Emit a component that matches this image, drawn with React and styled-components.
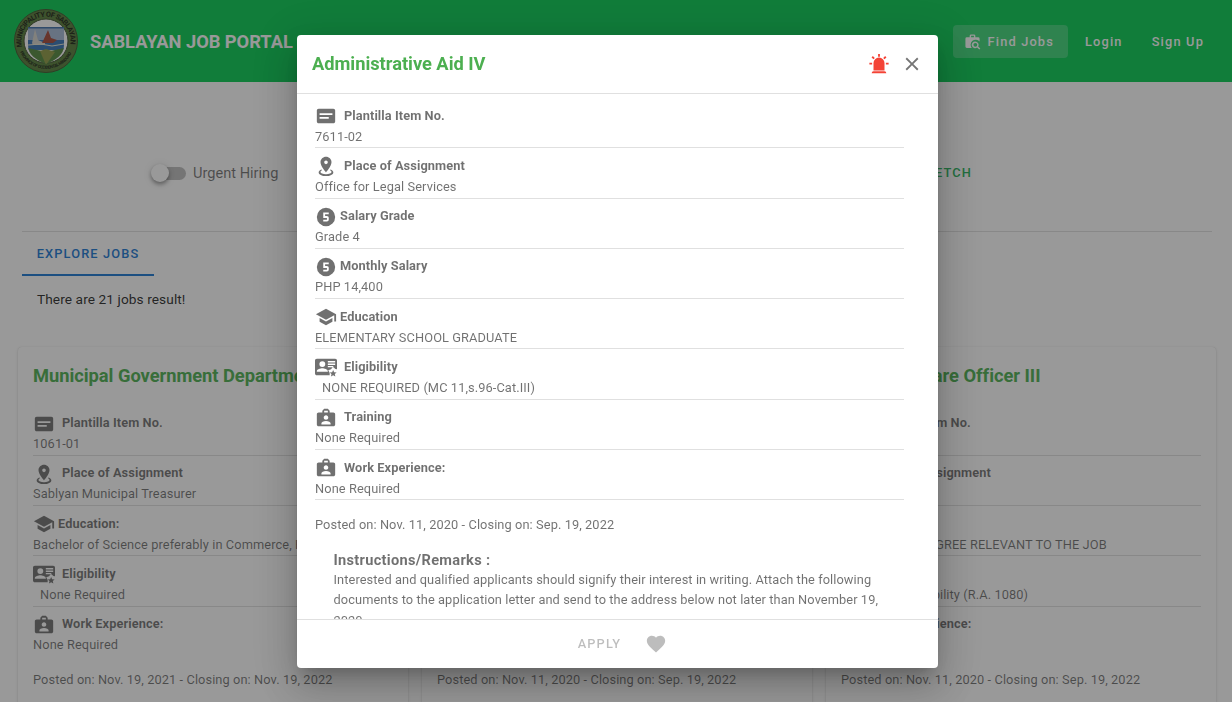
import React from "react";
import styled, { createGlobalStyle } from "styled-components";

const GlobalStyle = createGlobalStyle`
  * { box-sizing: border-box; }
  body { margin: 0; overflow: hidden; font-family: Roboto, "Liberation Sans", sans-serif; background: #fff; }
`;

const ICONS = {
  card: "M20 4H4C2.9 4 2 4.9 2 6V18C2 19.1 2.9 20 4 20H20C21.1 20 22 19.1 22 18V6C22 4.9 21.1 4 20 4M5 13H15V15H5V13M19 11H5V9H19V11Z",
  place: "M12 2C15.31 2 18 4.66 18 7.95C18 12.41 12 19 12 19C12 19 6 12.41 6 7.95C6 4.66 8.69 2 12 2M12 6A2 2 0 0 0 10 8A2 2 0 0 0 12 10A2 2 0 0 0 14 8A2 2 0 0 0 12 6M20 19C20 21.21 16.42 23 12 23C7.58 23 4 21.21 4 19C4 17.71 5.22 16.56 7.11 15.83L7.75 16.74C6.67 17.19 6 17.81 6 18.5C6 19.88 8.69 21 12 21C15.31 21 18 19.88 18 18.5C18 17.81 17.33 17.19 16.25 16.74L16.89 15.83C18.78 16.56 20 17.71 20 19Z",
  salary: "M12 2A10 10 0 0 1 22 12A10 10 0 0 1 12 22A10 10 0 0 1 2 12A10 10 0 0 1 12 2M15 9V7H9V13H13V15H9V17H13A2 2 0 0 0 15 15V13C15 11.89 14.1 11 13 11H11V9H15Z",
  school: "M12 3L1 9L12 15L21 10.09V17H23V9M5 13.18V17.18L12 21L19 17.18V13.18L12 17L5 13.18Z",
  eligibility: "M2 3H22C23.1 3 24 3.9 24 5V14.5L22.2 14.3L19.7 11.6L17.5 14.5L14.5 15.5L16 18.5V21H2C.9 21 0 20.1 0 19V5C0 3.9.9 3 2 3M14 5.5V7H22V5.5H14M14 8.3V9.8H22V8.3H14M14 11V12.3H20V11H14M8 13.4C6 13.4 2 14.5 2 16.5V17.3H14V16.5C14 14.5 10 13.4 8 13.4M8 5.6A3.2 3.2 0 0 0 4.8 8.8A3.2 3.2 0 0 0 8 12A3.2 3.2 0 0 0 11.2 8.8A3.2 3.2 0 0 0 8 5.6M19.8 15.2L20.9 17.7L23.6 17.9L21.6 19.7L22.2 22.4L19.8 21L17.4 22.4L18 19.7L16 17.9L18.7 17.7Z",
  work: "M20 6H16V4L14 2H10L8 4V6H4C2.9 6 2 6.9 2 8V19C2 20.1 2.9 21 4 21H20C21.1 21 22 20.1 22 19V8C22 6.9 21.1 6 20 6M10 4H14V6H10V4M12 9C13.4 9 14.5 10.1 14.5 11.5S13.4 14 12 14S9.5 12.9 9.5 11.5S10.6 9 12 9M17 19H7V17.75C7 16.37 9.24 15.25 12 15.25S17 16.37 17 17.75V19Z",
  alarm: "M6 6.9L3.87 4.78L5.28 3.37L7.4 5.5L6 6.9M13 1V4H11V1H13M20.13 4.78L18 6.9L16.6 5.5L18.72 3.37L20.13 4.78M4.5 10.5V12.5H1.5V10.5H4.5M19.5 10.5H22.5V12.5H19.5V10.5M6 20H18A2 2 0 0 1 20 22H4A2 2 0 0 1 6 20M12 5A6 6 0 0 1 18 11V19H6V11A6 6 0 0 1 12 5Z",
  close: "M19 6.41L17.59 5L12 10.59L6.41 5L5 6.41L10.59 12L5 17.59L6.41 19L12 13.41L17.59 19L19 17.59L13.41 12L19 6.41Z",
  heart: "M12 21.35L10.55 20.03C5.4 15.36 2 12.27 2 8.5C2 5.41 4.42 3 7.5 3C9.24 3 10.91 3.81 12 5.08C13.09 3.81 14.76 3 16.5 3C19.58 3 22 5.41 22 8.5C22 12.27 18.6 15.36 13.45 20.03L12 21.35Z",
  search: "M10 2H14A2 2 0 0 1 16 4V6H20A2 2 0 0 1 22 8V12A6.5 6.5 0 1 0 11 21H4A2 2 0 0 1 2 19V8A2 2 0 0 1 4 6H8V4A2 2 0 0 1 10 2M10 4V6H14V4H10M16 12A4.7 4.7 0 0 1 20 19L23 22L21.6 23.4L18.5 20.4A4.7 4.7 0 1 1 16 12M16 14A2.7 2.7 0 1 0 16 19.4A2.7 2.7 0 1 0 16 14Z",
};

const IconSvg = styled.svg`
  width: ${(p) => p.$size}px;
  height: ${(p) => p.$size}px;
  flex: none;
  display: block;
  fill: currentColor;
  fill-rule: evenodd;
`;
const Icon = ({ name, size = 22 }) => (
  <IconSvg viewBox="0 0 24 24" $size={size}><path d={ICONS[name]} /></IconSvg>
);

const Page = styled.div`
  height: 702px;
  overflow: hidden;
  display: flex;
  flex-direction: column;
`;
const Header = styled.header`
  height: 82px;
  flex: none;
  display: flex;
  align-items: center;
  padding: 0 16px 0 14px;
  background: #04cb51;
  color: #fff;
`;
const Seal = styled.svg`width: 64px; height: 64px; flex: none;`;
const Brand = styled.h1`
  margin: 0 auto 0 12px;
  padding-top: 1px;
  font-size: 18.3px;
  font-weight: 700;
  line-height: 30px;
  letter-spacing: -0.03px;
`;
const Nav = styled.nav`display: flex; align-items: center; gap: 5px;`;
const NavButton = styled.button`
  height: 33px;
  display: flex;
  align-items: center;
  gap: 6px;
  border: 0;
  border-radius: 4px;
  padding: 0 ${(p) => (p.$active ? "14px 0 11px" : "12px")};
  background: ${(p) => (p.$active ? "rgba(255,255,255,.22)" : "transparent")};
  color: #fff;
  font: 500 12.8px Roboto, sans-serif;
  letter-spacing: 1.17px;
`;
const Filters = styled.section`
  height: 150px;
  flex: none;
  margin: 0 20px 0 22px;
  padding: 0 240px 0 129px;
  display: flex;
  align-items: center;
  justify-content: space-between;
  border-bottom: 1px solid #e0e0e0;
`;
const SwitchLabel = styled.label`
  display: flex;
  align-items: center;
  gap: 7px;
  padding-top: 33px;
  font-size: 14.6px;
  line-height: 18px;
  color: rgba(0,0,0,.56);
`;
const Track = styled.span`
  width: 33px;
  height: 13px;
  margin-left: 2px;
  border-radius: 7px;
  background: #bdbdbd;
  display: flex;
  align-items: center;
`;
const Thumb = styled.span`
  width: 18px;
  height: 18px;
  margin-left: -2px;
  flex: none;
  border-radius: 50%;
  background: #fff;
  box-shadow: 0 2px 4px -1px rgba(0,0,0,.3), 0 3px 4px rgba(0,0,0,.18), 0 1px 8px rgba(0,0,0,.14);
`;
const FetchButton = styled.button`
  border: 0;
  padding: 32px 0 0;
  background: none;
  color: #27b25a;
  font: 500 12.8px Roboto, sans-serif;
  letter-spacing: 1.14px;
`;
const Tab = styled.div`
  width: 132px;
  height: 44px;
  flex: none;
  margin-left: 22px;
  text-align: center;
  line-height: 44px;
  font-size: 12.8px;
  font-weight: 500;
  letter-spacing: 1.14px;
  color: #1976d2;
  border-bottom: 2px solid #1976d2;
`;
const ResultText = styled.p`
  margin: 14px 0 0 37px;
  height: 57px;
  flex: none;
  font-size: 13.7px;
  line-height: 19px;
  letter-spacing: 0.08px;
  color: rgba(0,0,0,.87);
`;
const Cards = styled.main`
  display: grid;
  grid-template-columns: repeat(3, 390px);
  gap: 14px;
  padding-left: 18px;
  height: 400px;
  flex: none;
`;
const Card = styled.article`
  padding: 14px 15px;
  border-radius: 4px;
  background: #fff;
  box-shadow: 0 1px 3px rgba(0,0,0,.16), 0 0 1px rgba(0,0,0,.14);
  white-space: nowrap;
  overflow: hidden;
`;
const CardTitle = styled.h2`
  margin: 0 0 14px;
  font-size: 18.3px;
  font-weight: 700;
  line-height: 30.5px;
  letter-spacing: -0.02px;
  color: #4caf50;
`;
const Row = styled.div`
  height: 50.3px;
  border-bottom: ${(p) => (p.$last ? "0" : "1px solid rgba(0,0,0,.12)")};
  color: rgba(0,0,0,.56);
  white-space: nowrap;
`;
const RowLabel = styled.div`
  display: flex;
  align-items: center;
  gap: ${(p) => (p.$tight ? 3 : 7)}px;
  padding-top: 6px;
  height: 30px;
  font-size: 12.8px;
  font-weight: 700;
  line-height: 20px;
  letter-spacing: 0.08px;
`;
const LabelText = styled.span`height: 21px;`;
const RowValue = styled.div`
  padding-left: ${(p) => p.$indent || 0}px;
  font-size: 12.8px;
  line-height: 20px;
  margin-top: -1.5px;
  letter-spacing: 0.1px;
`;
const Posted = styled.div`
  margin-top: ${(p) => p.$top}px;
  font-size: 12.8px;
  line-height: 20px;
  letter-spacing: 0.09px;
  color: rgba(0,0,0,.56);
`;

const Overlay = styled.div`
  position: fixed;
  inset: 0;
  display: flex;
  align-items: center;
  justify-content: center;
  padding: 1px 0 0 3px;
  background: rgba(33,33,33,.46);
`;
const Dialog = styled.section`
  width: 641px;
  height: 633px;
  display: flex;
  flex-direction: column;
  overflow: hidden;
  border-radius: 4px;
  background: #fff;
  box-shadow: 0 10px 14px -6px rgba(0,0,0,.2), 0 22px 35px 3px rgba(0,0,0,.14), 0 8px 42px 7px rgba(0,0,0,.12);
`;
const DialogHeader = styled.header`
  height: 59px;
  flex: none;
  display: flex;
  align-items: center;
  gap: 11px;
  padding: 0 15px;
  border-bottom: 1px solid rgba(0,0,0,.12);
`;
const DialogTitle = styled.h2`
  margin: 0 auto 0 0;
  font-size: 18.3px;
  font-weight: 700;
  line-height: 30px;
  letter-spacing: -0.02px;
  color: #4caf50;
`;
const IconButton = styled.button`
  border: 0;
  padding: 0;
  background: none;
  color: ${(p) => p.$color};
`;
const DialogBody = styled.div`
  flex: 1;
  min-height: 0;
  overflow: hidden;
  padding: 4px 34px 0 18px;
`;
const Remarks = styled.div`
  margin: 16.5px 0 0 18.5px;
  font-size: 12.8px;
  line-height: 20.1px;
  letter-spacing: 0.09px;
  color: rgba(0,0,0,.56);
`;
const RemarksTitle = styled.h3`
  margin: 0;
  font-size: 14.6px;
  font-weight: 700;
  line-height: 19px;
  letter-spacing: 0.3px;
`;
const DialogFooter = styled.footer`
  height: 49px;
  flex: none;
  display: flex;
  align-items: center;
  justify-content: center;
  gap: 24px;
  padding-left: 10px;
  border-top: 1px solid rgba(0,0,0,.12);
`;
const ApplyButton = styled.button`
  border: 0;
  padding: 0 0 2px;
  background: none;
  color: rgba(0,0,0,.26);
  font: 500 12.8px Roboto, sans-serif;
  letter-spacing: 1.14px;
`;

const Field = ({ icon, label, value, indent, last }) => (
  <Row $last={last}>
    <RowLabel $tight={icon === "school" || icon === "salary"}>
      <Icon name={icon} />
      <LabelText>{label}</LabelText>
    </RowLabel>
    <RowValue $indent={indent}>{value}</RowValue>
  </Row>
);

const MunicipalSeal = () => (
  <Seal viewBox="0 0 64 64">
    <defs>
      <path id="sealTop" d="M8.2 38A24.5 24.5 0 1 1 55.8 38" />
      <path id="sealBottom" d="M6 43A28.5 28.5 0 0 0 58 43" />
      <clipPath id="shield"><path d="M14 18H50V36C50 46 42 51 32 55C22 51 14 46 14 36Z" /></clipPath>
    </defs>
    <circle cx="32" cy="32" r="31.5" fill="#567c38" stroke="#40532a" />
    <circle cx="32" cy="32" r="22" fill="#fff" stroke="#3d4f2c" />
    <g clipPath="url(#shield)">
      <path fill="#a5b9d5" d="M14 18H50V32H14Z" />
      <path fill="#3574b6" d="M14 31H50V41H14Z" />
      <path fill="#52883c" d="M14 39L32 43L50 39V56H14Z" />
      <path fill="#8f9a43" d="M26 42L32 40L41 43L32 56Z" />
      <path fill="#d5d3cc" d="M18 34L21 20L24 31L31 34V36H19Z" />
      <path fill="#a44737" d="M29 32L34 21L37 29L43 31L39 34H28Z" />
      <path fill="none" stroke="#e8e4d0" d="M14 36L27 35L38 37L50 35" />
      <path fill="none" stroke="#3b6da8" strokeWidth="1.5" d="M14 18.7H50" />
    </g>
    <text fill="#182312" fontFamily="Roboto" fontWeight="700" fontSize="7.2"><textPath href="#sealTop" textLength="86">MUNICIPALITY OF SABLAYAN</textPath></text>
    <text fill="#182312" fontFamily="Roboto" fontWeight="700" fontSize="4.3"><textPath href="#sealBottom" textLength="64">PROVINCE OF OCCIDENTAL MINDORO</textPath></text>
  </Seal>
);

const jobs = [
  {
    title: "Municipal Government Department Head",
    item: "1061-01",
    place: "Sablyan Municipal Treasurer",
    education: "Bachelor of Science preferably in Commerce, Public Admin",
    eligibility: "None Required",
    experience: "None Required",
    posted: "Posted on: Nov. 19, 2021 - Closing on: Nov. 19, 2022",
  },
  {
    title: "Administrative Aid IV",
    item: "7611-02",
    place: "Office for Legal Services",
    education: "ELEMENTARY SCHOOL GRADUATE",
    eligibility: "NONE REQUIRED",
    experience: "None Required",
    posted: "Posted on: Nov. 11, 2020 - Closing on: Sep. 19, 2022",
  },
  {
    title: "Social Welfare Officer III",
    item: "7611-03",
    place: "Office for Social",
    education: "BACHELOR'S DEGREE RELEVANT TO THE JOB",
    eligibility: "Chartered Eligibility (R.A. 1080)",
    experience: "1 year",
    posted: "Posted on: Nov. 11, 2020 - Closing on: Sep. 19, 2022",
  },
];

export default function App() {
  return (
    <>
      <GlobalStyle />
      <Page>
        <Header>
          <MunicipalSeal />
          <Brand>SABLAYAN JOB PORTAL</Brand>
          <Nav>
            <NavButton $active><Icon name="search" size={17} />Find Jobs</NavButton>
            <NavButton>Login</NavButton>
            <NavButton>Sign Up</NavButton>
          </Nav>
        </Header>
        <Filters>
          <SwitchLabel><Track><Thumb /></Track>Urgent Hiring</SwitchLabel>
          <FetchButton>FETCH</FetchButton>
        </Filters>
        <Tab>EXPLORE JOBS</Tab>
        <ResultText>There are 21 jobs result!</ResultText>
        <Cards>
          {jobs.map((job) => (
            <Card key={job.title}>
              <CardTitle>{job.title}</CardTitle>
              <Field icon="card" label="Plantilla Item No." value={job.item} />
              <Field icon="place" label="Place of Assignment" value={job.place} />
              <Field icon="school" label="Education:" value={job.education} />
              <Field icon="eligibility" label="Eligibility" value={job.eligibility} indent={7} />
              <Field icon="work" label="Work Experience:" value={job.experience} last />
              <Posted $top={13}>{job.posted}</Posted>
            </Card>
          ))}
        </Cards>
      </Page>
      <Overlay>
        <Dialog role="dialog">
          <DialogHeader>
            <DialogTitle>Administrative Aid IV</DialogTitle>
            <IconButton $color="#f44336" aria-label="Urgent"><Icon name="alarm" /></IconButton>
            <IconButton $color="#757575" aria-label="Close"><Icon name="close" /></IconButton>
          </DialogHeader>
          <DialogBody>
            <Field icon="card" label="Plantilla Item No." value="7611-02" />
            <Field icon="place" label="Place of Assignment" value="Office for Legal Services" />
            <Field icon="salary" label="Salary Grade" value="Grade 4" />
            <Field icon="salary" label="Monthly Salary" value="PHP 14,400" />
            <Field icon="school" label="Education" value="ELEMENTARY SCHOOL GRADUATE" />
            <Field icon="eligibility" label="Eligibility" value="NONE REQUIRED (MC 11,s.96-Cat.III)" indent={7} />
            <Field icon="work" label="Training" value="None Required" />
            <Field icon="work" label="Work Experience:" value="None Required" />
            <Posted $top={14.5}>Posted on: Nov. 11, 2020 - Closing on: Sep. 19, 2022</Posted>
            <Remarks>
              <RemarksTitle>Instructions/Remarks :</RemarksTitle>
              Interested and qualified applicants should signify their interest in writing. Attach the following documents to the application letter and send to the address below not later than November 19, 2020
            </Remarks>
          </DialogBody>
          <DialogFooter>
            <ApplyButton>APPLY</ApplyButton>
            <IconButton $color="#bdbdbd" aria-label="Save"><Icon name="heart" /></IconButton>
          </DialogFooter>
        </Dialog>
      </Overlay>
    </>
  );
}
